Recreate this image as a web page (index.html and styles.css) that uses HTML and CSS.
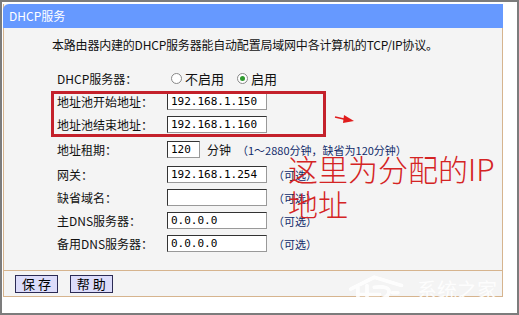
FILE: index.html
```html
<!DOCTYPE html>
<html lang="zh-CN">
<head>
  <meta charset="UTF-8" />
  <title>DHCP服务</title>
  <link rel="stylesheet" href="styles.css">
</head>
<body>

<div class="frame">
  <div class="panel">
    <div class="title">DHCP服务</div>
    <div class="body">
      <p class="intro">本路由器内建的DHCP服务器能自动配置局域网中各计算机的TCP/IP协议。</p>

      <div class="row">
        <span class="label">DHCP服务器：</span>
        <span class="radio"></span><span class="opt">不启用</span>
        <span class="radio on"></span><span class="opt">启用</span>
      </div>

      <div class="pool">
        <div class="row">
          <span class="label">地址池开始地址：</span>
          <input class="ip" value="192.168.1.150">
        </div>
        <div class="row">
          <span class="label">地址池结束地址：</span>
          <input class="ip" value="192.168.1.160">
        </div>
      </div>

      <div class="row lease">
        <span class="label">地址租期：</span>
        <input class="ip short" value="120">
        <span class="unit">分钟</span>
        <span class="hint">（1～2880分钟，缺省为120分钟）</span>
      </div>
      <div class="row gw">
        <span class="label">网关：</span>
        <input class="ip" value="192.168.1.254">
        <span class="hint">（可选）</span>
      </div>
      <div class="row">
        <span class="label">缺省域名：</span>
        <input class="ip" value="">
        <span class="hint">（可选）</span>
      </div>
      <div class="row">
        <span class="label">主DNS服务器：</span>
        <input class="ip" value="0.0.0.0">
        <span class="hint">（可选）</span>
      </div>
      <div class="row">
        <span class="label">备用DNS服务器：</span>
        <input class="ip" value="0.0.0.0">
        <span class="hint">（可选）</span>
      </div>
    </div>
    <div class="foot">
      <button>保 存</button>
      <button>帮 助</button>
    </div>
  </div>

  <svg class="arrow" width="22" height="12" viewBox="0 0 22 12">
    <path d="M1 4 L12 6.5" stroke="#e01c1c" stroke-width="1.6" fill="none"/>
    <path d="M10 2 L20 8 L9 10 Z" fill="#e01c1c"/>
  </svg>

  <div class="note">这里为分配的IP<br>地址</div>

  <div class="mark">
    <svg width="60" height="32" viewBox="0 0 66 34">
      <path d="M4 16 L30 3 L60 12 M12 14 L12 30 M22 12 L22 30 M12 22 L36 22 M30 14 Q48 12 46 20 Q44 28 30 27 M50 20 L56 20" stroke="#fff" stroke-width="4" fill="none" stroke-linecap="round"/>
    </svg>
    <span>系统之家</span>
  </div>
</div>

</body>
</html>
```

FILE: styles.css
```css
body { margin: 0; background: #fff; font-family: "Noto Sans CJK SC", "DejaVu Sans", sans-serif; font-size: 12px; }
.frame { position: relative; width: 519px; height: 315px; box-sizing: border-box; border: 2px solid #7c7c7c; background: #fff; padding: 2px 0 0 1px; overflow: hidden; }
.panel { width: 500px; height: 293px; box-sizing: border-box; border: 1px solid #d6b48e; border-top: 0; background: #f4f4f4; }
.title { height: 24px; line-height: 23px; margin: 0 -1px; padding-left: 6px; background: #6699ff; color: #fff; border-radius: 6px 0 0 0; font-size: 12px; }
.body { height: 242px; box-sizing: border-box; padding: 9px 0 0 48px; }
.intro { margin: 0 0 14px; height: 16px; line-height: 16px; color: #111; letter-spacing: -0.2px; }
.row { display: flex; align-items: center; height: 23px; padding-left: 5px; color: #111; }
.label { width: 110px; flex: none; }
.radio { width: 11px; height: 11px; border: 1px solid #888; border-radius: 50%; background: #fff; box-sizing: border-box; margin: 0 3px 0 4px; position: relative; }
.radio.on::after { content: ""; position: absolute; left: 2px; top: 2px; width: 5px; height: 5px; border-radius: 50%; background: #2f9a2f; }
.opt { margin-right: 9px; font-size: 13px; }
.pool { position: relative; }
.pool::after { content: ""; position: absolute; left: -1px; top: 1px; width: 269px; height: 40px; border: 3px solid #c4212b; pointer-events: none; }
.ip { width: 100px; height: 17px; box-sizing: border-box; border: 1px solid #333; border-right-color: #999; border-bottom-color: #999; background: #fff; padding: 0 3px; font-family: "DejaVu Sans Mono", monospace; font-size: 11px; color: #000; margin: 0; }
.ip.short { width: 33px; }
.unit { margin-left: 7px; }
.hint { margin-left: 6px; color: #102a6a; font-size: 11px; }
.lease { margin-top: 2px; }
.gw { margin-top: 2px; }
.foot { border-top: 1px solid #d6b48e; height: 26px; padding: 4px 0 0 11px; box-sizing: border-box; }
.foot button { width: 43px; height: 18px; padding: 0; margin: 0 9px 0 0; background: #dcdcfa; border: 1px solid #2b2b55; font-family: "Noto Sans CJK SC", sans-serif; font-size: 13px; line-height: 16px; color: #000; }
.arrow { position: absolute; left: 332px; top: 111px; }
.note { position: absolute; left: 286px; top: 149px; font-size: 30px; line-height: 35px; color: #d42424; font-weight: 300; white-space: nowrap; }
.mark { position: absolute; left: 345px; top: 272px; width: 170px; display: flex; align-items: center; gap: 10px; opacity: 0.9; white-space: nowrap; }
.mark span { color: #fff; font-size: 20px; line-height: 24px; }
```
